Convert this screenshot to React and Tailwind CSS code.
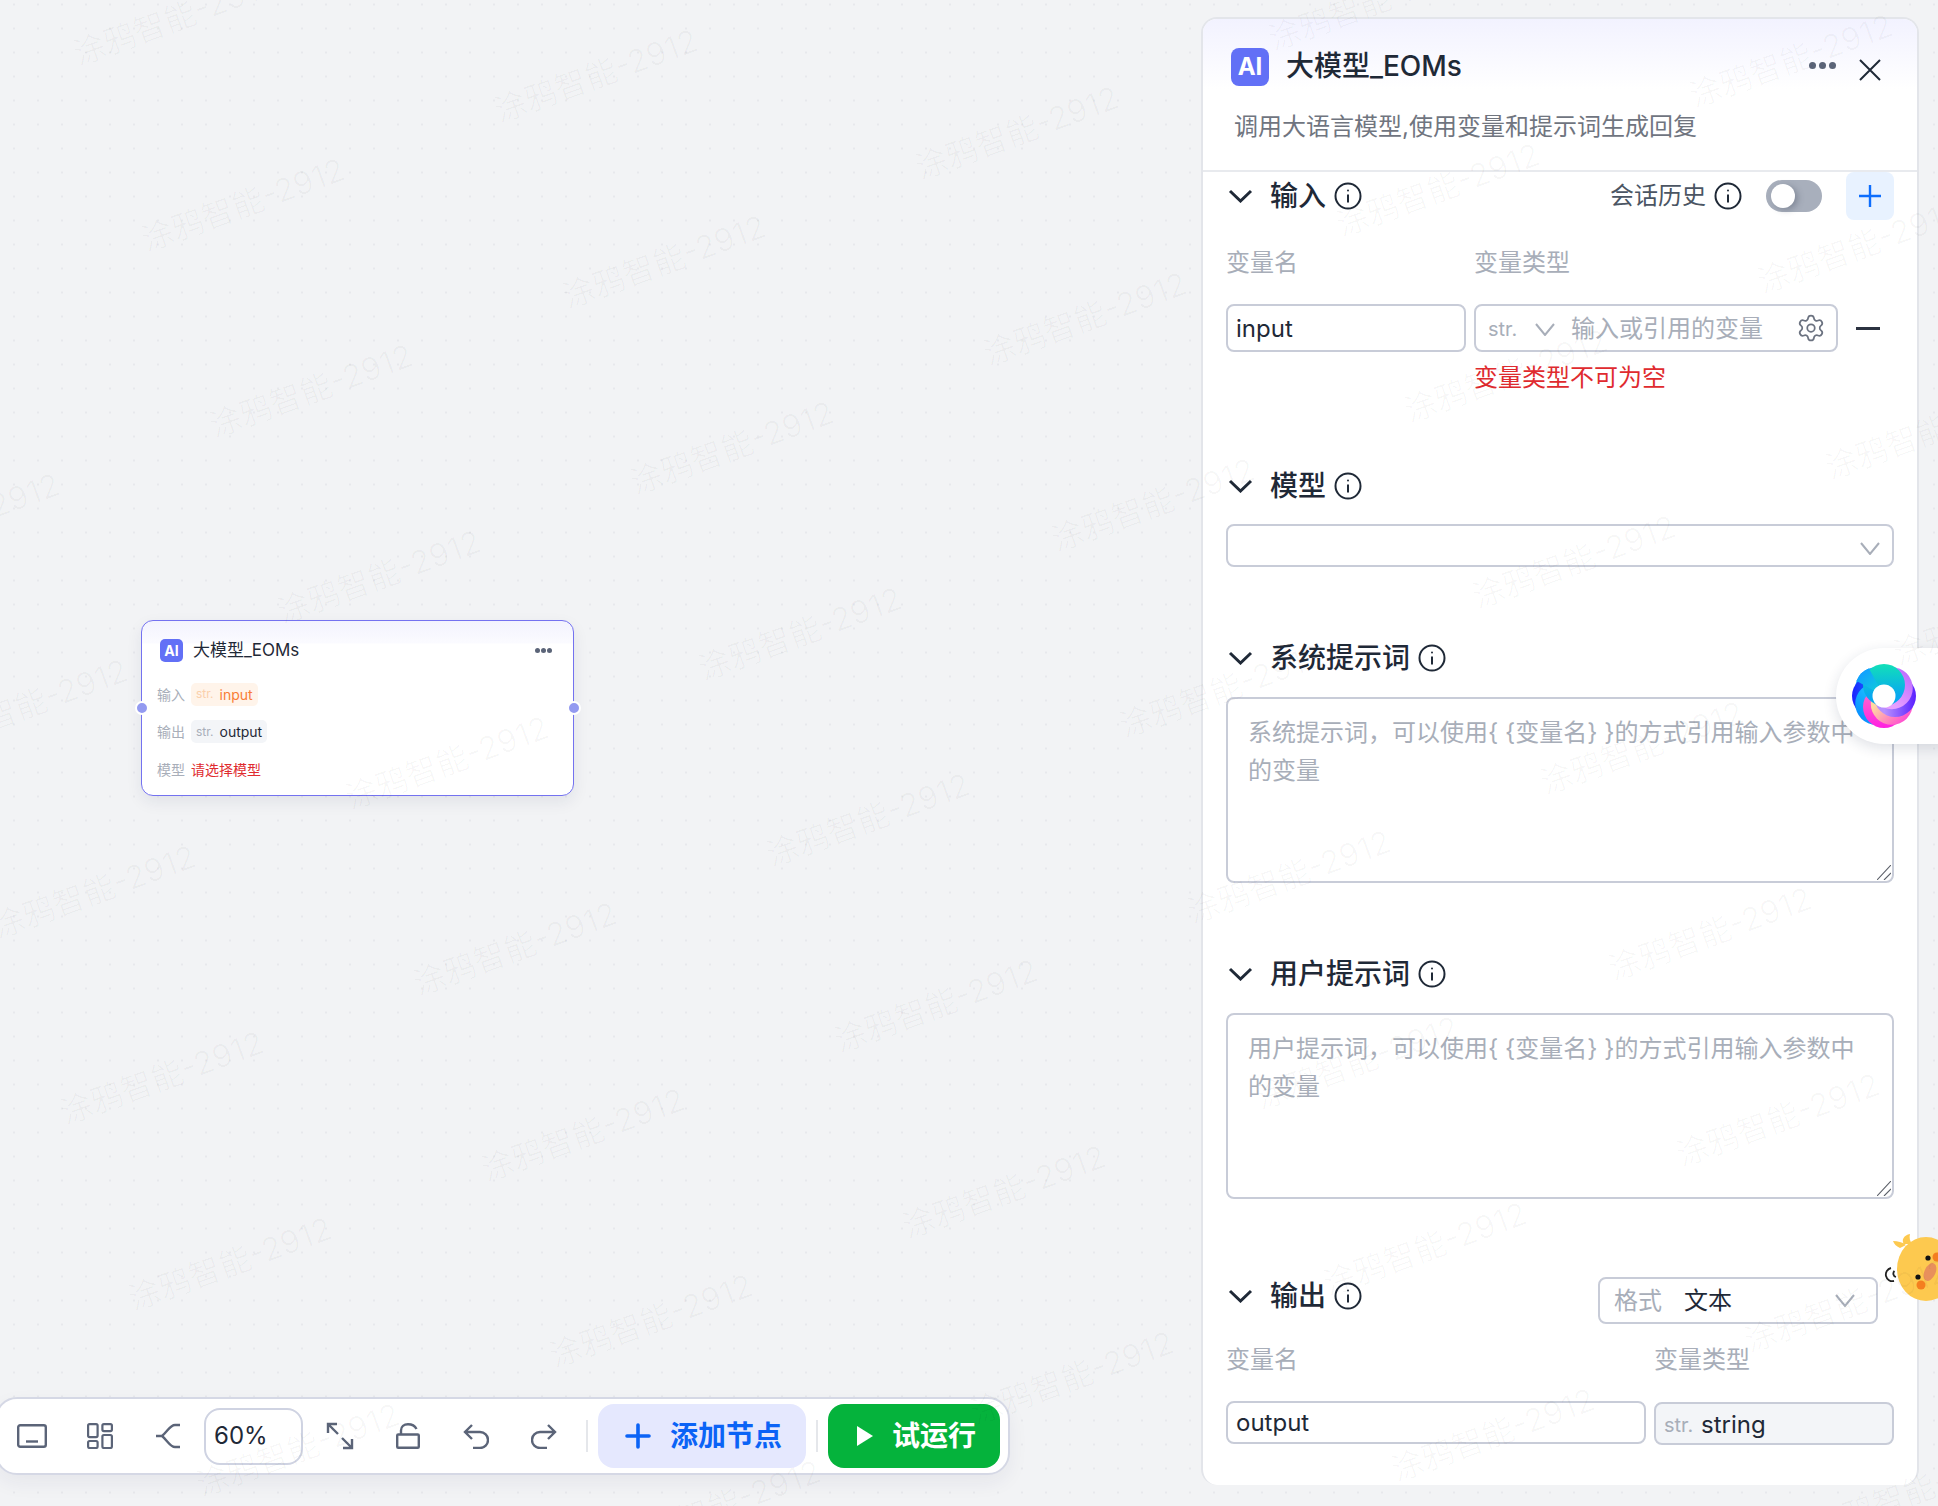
import { Settings } from 'lucide-react';

const watermarks = [];
for (let i = -1; i < 6; i++) {
  for (let j = -3; j < 9; j++) {
    const x = 175 + i * 421 + j * 68;
    const y = 19 + i * 57 + j * 186;
    if (x > -120 && x < 2060 && y > -60 && y < 1570) watermarks.push({ x, y });
  }
}

const petals = [
  { a: 315, c1: '#10a0ff', c2: '#10d8d0' },
  { a: 270, c1: '#1c20ff', c2: '#0aa0ff' },
  { a: 225, c1: '#0a90ff', c2: '#20c8ff' },
  { a: 180, c1: '#ff20e0', c2: '#ff60d0' },
  { a: 135, c1: '#ff50d0', c2: '#ffd8a0' },
  { a: 90, c1: '#5a20ff', c2: '#b890ff' },
  { a: 45, c1: '#c070ff', c2: '#e8a0ff' },
  { a: 0, c1: '#12e0b8', c2: '#08a8f0' },
];

function AiIcon({ big }) {
  return (
    <div
      className={`flex items-center justify-center bg-[#6270f6] text-white font-bold ${big ? 'w-[38px] h-[38px] rounded-[8px] text-[24px]' : 'w-[23px] h-[23px] rounded-[5px] text-[14px]'}`}
    >
      AI
    </div>
  );
}

function InfoIcon() {
  return (
    <svg width="28" height="28" viewBox="0 0 28 28" fill="none" stroke="#1f2937" strokeWidth="2">
      <circle cx="14" cy="14" r="12.5" />
      <path d="M14 12.5V20.5" />
      <circle cx="14" cy="8.5" r="1" fill="#1f2937" stroke="none" />
    </svg>
  );
}

function Arrow({ className = '' }) {
  return (
    <svg className={className} width="20" height="13" viewBox="0 0 20 13" fill="none" stroke="#a8aeb9" strokeWidth="2">
      <path d="M1 1L10 12L19 1" />
    </svg>
  );
}

function Dots({ big }) {
  const r = big ? 'w-[7px] h-[7px]' : 'w-[5px] h-[5px]';
  return (
    <div className={`flex ${big ? 'gap-[3px]' : 'gap-[1px]'}`}>
      <i className={`${r} rounded-full bg-[#5b6478]`} />
      <i className={`${r} rounded-full bg-[#5b6478]`} />
      <i className={`${r} rounded-full bg-[#5b6478]`} />
    </div>
  );
}

function Heading({ title, children, className = '' }) {
  return (
    <div className={`flex items-center h-[48px] ${className}`}>
      <svg width="28" height="14" viewBox="0 0 28 14" fill="none" stroke="#1f2937" strokeWidth="3">
        <path d="M4 2L14.5 12L25 2" />
      </svg>
      <span className="ml-[16px] mr-[8px] text-[28px] leading-[36px] font-medium text-[#1f2937]">{title}</span>
      <InfoIcon />
      {children}
    </div>
  );
}

function Labels({ second, secondClass }) {
  return (
    <div className="flex h-[36px] items-center text-[24px] text-[#a8aeb9]">
      <span className={secondClass}>变量名</span>
      <span>{second}</span>
    </div>
  );
}

function Prompt({ text }) {
  return (
    <div className="relative">
      <textarea
        className="block w-full h-[186px] resize-none rounded-[8px] border-2 border-[#c8ccd8] bg-transparent pl-[20px] pr-[22px] pt-[15px] text-[24px] leading-[37.5px] text-[#1f2937] outline-none placeholder:text-[#a8aeb9]"
        placeholder={text}
      />
      <svg className="absolute right-[3px] bottom-[3px]" width="14" height="15" viewBox="0 0 14 15" fill="none" stroke="#5b5f68" strokeWidth="1.1">
        <path d="M14 0L0 15M14 8L7 15" />
      </svg>
    </div>
  );
}

function ToolIcon({ children }) {
  return <div className="w-[68px] flex items-center justify-center">{children}</div>;
}

function Logo() {
  return (
    <svg width="64" height="64" viewBox="0 0 64 64">
      <defs>
        {petals.map((p, i) => (
          <linearGradient key={i} id={`petal${i}`} x1="0.5" y1="0" x2="0.5" y2="1">
            <stop offset="0" stopColor={p.c1} />
            <stop offset="0.75" stopColor={p.c2} />
          </linearGradient>
        ))}
        <clipPath id="petalWrap">
          <path d="M32 32L9 -10L-10 9Z" />
        </clipPath>
      </defs>
      {petals.map((p, i) => (
        <circle key={i} cx="32" cy="21" r="21" fill={`url(#petal${i})`} transform={`rotate(${p.a} 32 32)`} />
      ))}
      <g clipPath="url(#petalWrap)">
        <circle cx="32" cy="21" r="21" fill="url(#petal0)" transform="rotate(315 32 32)" />
      </g>
      <circle cx="32" cy="32" r="11.5" fill="#fff" />
    </svg>
  );
}

export default function App() {
  return (
    <div className="relative w-[1938px] h-[1506px] overflow-hidden bg-[#f2f3f5] bg-[radial-gradient(circle,#e7e8ec_1px,transparent_1.2px)] bg-[size:24px_24px] bg-[position:2px_-7.5px] font-['Inter','Noto_Sans_CJK_SC',sans-serif] text-[#1f2937]">
      {/* 캔버스 노드 */}
      <div className="absolute left-[141px] top-[620px] w-[433px] h-[176px] rounded-[12px] border-[1.5px] border-[#7472f0] bg-white bg-[linear-gradient(180deg,#f3f3fe_0,#fbfbff_22px,#fff_23px)] shadow-[0_6px_16px_rgba(30,40,80,0.08)]">
        <div className="flex items-center h-[24px] mt-[17px] pl-[18px] pr-[21px]">
          <AiIcon />
          <span className="ml-[10px] pt-[2px] text-[17px] text-[#1f2937]">大模型_EOMs</span>
          <div className="ml-auto">
            <Dots />
          </div>
        </div>
        <div className="flex flex-col gap-[13.5px] mt-[20px] pl-[15px] text-[14px]">
          <div className="flex items-center h-[24px]">
            <span className="w-[34px] text-[#a8aeb9]">输入</span>
            <span className="flex items-center h-[23px] px-[5px] rounded-[5px] bg-[#fff4ea] text-[#f97d35]">
              <span className="mr-[6px] text-[12px] text-[#fbd0ac]">str.</span>input
            </span>
          </div>
          <div className="flex items-center h-[24px]">
            <span className="w-[34px] text-[#a8aeb9]">输出</span>
            <span className="flex items-center h-[23px] px-[5px] rounded-[5px] bg-[#f3f5f8] text-[#1f2937]">
              <span className="mr-[6px] text-[12px] text-[#a8aeb9]">str.</span>output
            </span>
          </div>
          <div className="flex items-center h-[24px]">
            <span className="w-[34px] text-[#a8aeb9]">模型</span>
            <span className="text-[#e02b2f]">请选择模型</span>
          </div>
        </div>
        <i className="absolute left-[-7px] top-[80px] w-[14px] h-[14px] rounded-full border-2 border-white bg-[#939af0]" />
        <i className="absolute right-[-8px] top-[80px] w-[14px] h-[14px] rounded-full border-2 border-white bg-[#939af0]" />
      </div>

      {/* 하단 툴바 */}
      <div className="absolute left-[-5px] top-[1397px] w-[1015px] h-[78px] flex items-center pl-[1px] rounded-[22px] border-2 border-[#d5d8e5] bg-white shadow-[0_8px_20px_rgba(30,40,80,0.06)]">
        <ToolIcon>
          <svg width="30" height="24" viewBox="0 0 30 24" fill="none" stroke="#5b6478" strokeWidth="2.4">
            <rect x="1.2" y="1.2" width="27.6" height="21.6" rx="2" />
            <path d="M9 17.5H21" />
          </svg>
        </ToolIcon>
        <ToolIcon>
          <svg width="26" height="26" viewBox="0 0 26 26" fill="none" stroke="#5b6478" strokeWidth="2.2">
            <rect x="1.1" y="1.1" width="9.5" height="13" rx="1.5" />
            <rect x="15.4" y="1.1" width="9.5" height="7" rx="1.5" />
            <rect x="1.1" y="18" width="9.5" height="7" rx="1.5" />
            <rect x="15.4" y="12" width="9.5" height="13" rx="1.5" />
          </svg>
        </ToolIcon>
        <ToolIcon>
          <svg width="24" height="26" viewBox="0 0 24 26" fill="none" stroke="#5b6478" strokeWidth="2.4">
            <path d="M0 13H6M24 2H19C14 2 12 8 6 13C12 18 14 24 19 24H24" />
          </svg>
        </ToolIcon>
        <div className="ml-[2px] w-[99px] h-[57px] flex items-center pl-[8px] rounded-[16px] border-2 border-[#cfd3e2] text-[24px] text-[#1f2937]">
          60%
        </div>
        <div className="ml-[3px]" />
        <ToolIcon>
          <svg width="28" height="28" viewBox="0 0 28 28" fill="none" stroke="#5b6478" strokeWidth="2.4">
            <path d="M2 11V2H11M2 2L12 12M26 17V26H17M26 26L16 16" />
          </svg>
        </ToolIcon>
        <ToolIcon>
          <svg width="24" height="26" viewBox="0 0 24 26" fill="none" stroke="#5b6478" strokeWidth="2.4">
            <rect x="1.2" y="11.5" width="21.6" height="13.3" rx="1" />
            <path d="M5 11.5V7.5C5 3.5 8 1.2 12 1.2C16 1.2 19 3 20.5 6" />
          </svg>
        </ToolIcon>
        <ToolIcon>
          <svg width="26" height="26" viewBox="0 0 26 26" fill="none" stroke="#5b6478" strokeWidth="2.4">
            <path d="M9 2L2 9L9 16M2 9H17C21.5 9 25 12.5 25 17C25 21.5 21.5 25 17 25H10" />
          </svg>
        </ToolIcon>
        <ToolIcon>
          <svg width="26" height="26" viewBox="0 0 26 26" fill="none" stroke="#5b6478" strokeWidth="2.4">
            <path d="M17 2L24 9L17 16M24 9H9C4.5 9 1 12.5 1 17C1 21.5 4.5 25 9 25H16" />
          </svg>
        </ToolIcon>
        <i className="ml-[8px] w-[2px] h-[32px] bg-[#e5e7eb]" />
        <button className="ml-[10px] w-[208px] h-[64px] flex items-center gap-[19px] pl-[27px] rounded-[16px] bg-[#e5e8fe] text-[28px] font-semibold text-[#0b63f6]">
          <svg width="26" height="26" viewBox="0 0 26 26" fill="none" stroke="#0b63f6" strokeWidth="3.6" strokeLinecap="round">
            <path d="M13 2V24M2 13H24" />
          </svg>
          添加节点
        </button>
        <i className="ml-[10px] w-[2px] h-[32px] bg-[#e5e7eb]" />
        <button className="ml-[10px] w-[172px] h-[64px] flex items-center gap-[19px] pl-[29px] rounded-[16px] bg-[#05b33c] text-[28px] font-semibold text-white">
          <svg width="16" height="20" viewBox="0 0 16 20" fill="#fff">
            <path d="M0 0L16 10L0 20Z" />
          </svg>
          试运行
        </button>
      </div>

      {/* 오른쪽 설정 패널 */}
      <div className="absolute left-[1201px] top-[17px] w-[718px] h-[1468px] overflow-hidden rounded-[16px] border-2 border-b-0 border-[#e3e5ea] bg-white">
        <div className="h-[153px] border-b-2 border-[#e8eaee] bg-[linear-gradient(180deg,#f2f2ff,#fff_70px)]">
          <div className="flex items-center pt-[28px] pl-[28px]">
            <AiIcon big />
            <span className="ml-[17px] mt-[-2px] text-[28px] font-medium text-[#1f2937]">大模型_EOMs</span>
            <div className="ml-auto mt-[-4px]">
              <Dots big />
            </div>
            <svg className="ml-[23px] mr-[36px] mt-[5px]" width="22" height="22" viewBox="0 0 22 22" fill="none" stroke="#1f2937" strokeWidth="2">
              <path d="M1 1L21 21M21 1L1 21" />
            </svg>
          </div>
          <p className="mt-[24px] pl-[31px] text-[24px] leading-[32px] text-[#70757f]">
            调用大语言模型,使用变量和提示词生成回复
          </p>
        </div>

        <div className="px-[23px]">
          <Heading title="输入">
            <div className="ml-auto flex items-center">
              <span className="mr-[8px] text-[24px] text-[#4b5563]">会话历史</span>
              <InfoIcon />
              <div className="ml-[24px] w-[56px] h-[32px] flex items-center pl-[5px] rounded-full bg-[#a8afbc]">
                <i className="w-[24px] h-[24px] rounded-full bg-white shadow-[3px_2px_6px_rgba(60,70,90,0.35)]" />
              </div>
              <div className="ml-[24px] w-[48px] h-[48px] flex items-center justify-center rounded-[8px] bg-[#e8f2ff]">
                <svg width="22" height="22" viewBox="0 0 22 22" fill="none" stroke="#0d6efd" strokeWidth="2.4">
                  <path d="M11 0V22M0 11H22" />
                </svg>
              </div>
            </div>
          </Heading>

          <div className="mt-[25px]">
            <Labels second="变量类型" secondClass="w-[248px]" />
          </div>
          <div className="flex items-center mt-[23px]">
            <div className="w-[240px] h-[48px] flex items-center pl-[8px] pt-[2px] rounded-[8px] border-2 border-[#c8ccd8] text-[24px] text-[#1f2937]">
              input
            </div>
            <div className="ml-[8px] w-[364px] h-[48px] flex items-center pl-[12px] pt-[2px] rounded-[8px] border-2 border-[#c8ccd8]">
              <span className="w-[47px] text-[20px] text-[#a8aeb9]">str.</span>
              <Arrow />
              <span className="ml-[16px] text-[24px] text-[#a8aeb9]">输入或引用的变量</span>
              <Settings className="ml-auto mr-[10px] mt-[-2px]" size={30} strokeWidth={1.4} color="#6b7280" />
            </div>
            <i className="ml-[18px] mt-[1px] w-[24px] h-[3px] bg-[#2b3240]" />
          </div>
          <p className="mt-[10px] ml-[248px] text-[24px] leading-[32px] text-[#e02b2f]">变量类型不可为空</p>

          <Heading title="模型" className="mt-[68px]" />
          <div className="mt-[14px] h-[43px] flex items-center justify-end pr-[12px] rounded-[8px] border-2 border-[#c8ccd8]">
            <Arrow className="mt-[5px]" />
          </div>

          <Heading title="系统提示词" className="mt-[67px]" />
          <div className="mt-[15px]">
            <Prompt text="系统提示词，可以使用{ {变量名} }的方式引用输入参数中的变量" />
          </div>

          <Heading title="用户提示词" className="mt-[67px]" />
          <div className="mt-[15px]">
            <Prompt text="用户提示词，可以使用{ {变量名} }的方式引用输入参数中的变量" />
          </div>

          <Heading title="输出" className="mt-[73px]">
            <div className="ml-auto mr-[16px] mt-[9px] w-[280px] h-[47px] flex items-center pl-[14px] pr-[21px] rounded-[8px] border-2 border-[#c8ccd8] text-[24px]">
              <span className="text-[#a8aeb9]">格式</span>
              <span className="ml-[22px] text-[#1f2937]">文本</span>
              <Arrow className="ml-auto" />
            </div>
          </Heading>

          <div className="mt-[22px]">
            <Labels second="变量类型" secondClass="w-[428px]" />
          </div>
          <div className="flex items-start mt-[23px]">
            <div className="w-[420px] h-[43px] flex items-center pl-[8px] rounded-[8px] border-2 border-[#c8ccd8] text-[24px] text-[#1f2937]">
              output
            </div>
            <div className="ml-[8px] mt-[1px] w-[240px] h-[43px] flex items-center pl-[8px] pt-[2px] rounded-[8px] border-2 border-[#c8ccd8] bg-[#f3f5f8] text-[24px] text-[#1f2937]">
              <span className="w-[37px] text-[20px] text-[#a8aeb9]">str.</span>
              string
            </div>
          </div>
        </div>
      </div>

      {/* 떠 있는 로고 */}
      <div className="absolute left-[1836px] top-[648px] w-[110px] h-[96px] flex items-center pl-[16px] rounded-l-[48px] bg-white shadow-[0_4px_14px_rgba(30,40,80,0.14)]">
        <Logo />
      </div>

      {/* 병아리 */}
      <svg className="absolute left-[1880px] top-[1230px]" width="58" height="80" viewBox="0 0 58 80">
        <path d="M11 38A6.5 6.5 0 0 0 14 51M14.5 41A3.5 3.5 0 0 0 16 47" fill="none" stroke="#222" strokeWidth="1.8" />
        <path d="M24 14C21 10 24 5 30 4C29 8 30 11 32 14ZM20 18C16 16 14 14 13 11C18 11 22 12 26 15Z" fill="#fdc94f" />
        <ellipse cx="46" cy="39" rx="29" ry="32" fill="#fdc94f" />
        <circle cx="48" cy="28" r="2.6" fill="#111" />
        <circle cx="38" cy="47" r="2.6" fill="#111" />
        <circle cx="57" cy="27" r="4.5" fill="#f47f1f" />
        <circle cx="41" cy="55" r="4.5" fill="#f47f1f" />
        <ellipse cx="50" cy="42" rx="5.5" ry="9.5" fill="#e8905c" transform="rotate(25 50 42)" />
      </svg>

      {/* 워터마크 */}
      <div className="absolute inset-0 overflow-hidden pointer-events-none">
        {watermarks.map((w, i) => (
          <span
            key={i}
            className="absolute -translate-x-1/2 -translate-y-1/2 -rotate-[20deg] whitespace-nowrap text-[32px] text-[rgba(0,0,0,0.026)]"
            style={{ left: w.x, top: w.y }}
          >
            涂鸦智能-2912
          </span>
        ))}
      </div>
    </div>
  );
}
